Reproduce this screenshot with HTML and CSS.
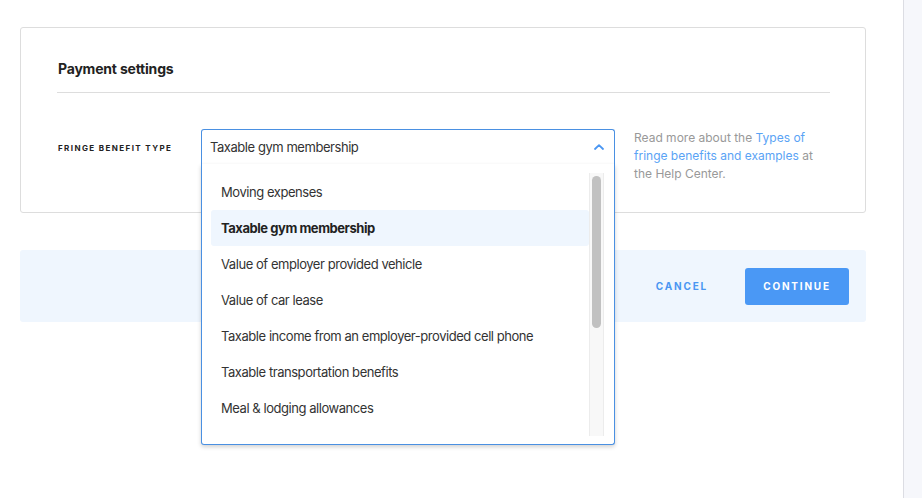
FILE: index.html
```html
<!DOCTYPE html>
<html lang="en">
<head>
    <meta charset="UTF-8">
    <meta name="viewport" content="width=device-width, initial-scale=1.0">
    <title>Payment settings</title>
    <link rel="stylesheet" href="styles.css">
</head>
<body>
    <div class="page">
        <main class="main">
            <section class="card">
                <h2 class="card-title">Payment settings</h2>
                <div class="form-row">
                    <label class="field-label">Fringe benefit type</label>
                    <div class="select">
                        <div class="select-head">
                            <span>Taxable gym membership</span>
                            <svg class="chevron" width="10" height="6" viewBox="0 0 10 6">
                                <path d="M1 5 L5 1.2 L9 5" fill="none" stroke="#4a96f2" stroke-width="1.8" stroke-linecap="round" stroke-linejoin="round"/>
                            </svg>
                        </div>
                        <div class="menu">
                            <ul class="options">
                                <li>Moving expenses</li>
                                <li class="selected">Taxable gym membership</li>
                                <li>Value of employer provided vehicle</li>
                                <li>Value of car lease</li>
                                <li>Taxable income from an employer-provided cell phone</li>
                                <li>Taxable transportation benefits</li>
                                <li>Meal &amp; lodging allowances</li>
                            </ul>
                            <div class="scrollbar"><div class="thumb"></div></div>
                        </div>
                    </div>
                    <p class="help">Read more about the <a href="#">Types of fringe benefits and examples</a> at the Help Center.</p>
                </div>
            </section>
            <footer class="actions">
                <button class="btn-cancel">Cancel</button>
                <button class="btn-continue">Continue</button>
            </footer>
        </main>
        <aside class="sidebar"></aside>
    </div>
</body>
</html>
```

FILE: styles.css
```css
* {
    margin: 0;
    padding: 0;
    box-sizing: border-box;
    font-family: Inter, "Liberation Sans", sans-serif;
}
body {
    background: #ffffff;
    color: #2b2b2b;
    min-height: 100vh;
    overflow: hidden;
}
.page {
    display: flex;
    min-height: 100vh;
}
.main {
    width: 903px;
    padding: 27px 37px 0 20px;
}
.sidebar {
    flex: 1;
    background: #f6f7fb;
    border-left: 1px solid #dcdde3;
}
.card {
    border: 1px solid #dddddd;
    border-radius: 3px;
    padding: 0 35px 0 36px;
    height: 186px;
}
.card-title {
    font-size: 14px;
    font-weight: 700;
    letter-spacing: -0.2px;
    color: #222;
    line-height: 20px;
    padding: 31px 1px 13px;
    border-bottom: 1px solid #dddddd;
}
.form-row {
    display: flex;
    align-items: flex-start;
    padding-top: 36px;
}
.field-label {
    width: 144px;
    padding-top: 14px;
    padding-left: 1px;
    font-size: 8px;
    font-weight: 700;
    letter-spacing: 1.4px;
    text-transform: uppercase;
    color: #222;
}
.select {
    position: relative;
    width: 414px;
}
.select-head {
    display: flex;
    justify-content: space-between;
    align-items: center;
    height: 36px;
    padding: 0 10px 0 8px;
    border: 1px solid #4a90e2;
    border-bottom-color: #a5a9b1;
    border-radius: 3px 3px 0 0;
    font-size: 13px;
    letter-spacing: -0.45px;
    color: #333;
}
.menu {
    position: absolute;
    top: 35px;
    left: 0;
    right: 0;
    height: 281px;
    background: #fff;
    border: 1px solid #4a90e2;
    border-top: none;
    border-radius: 0 0 3px 3px;
    box-shadow: 0 2px 4px rgba(0, 0, 0, 0.18);
    display: flex;
    padding: 10px 10px 8px 9px;
    z-index: 2;
}
.options {
    list-style: none;
    flex: 1;
}
.options li {
    height: 36px;
    line-height: 36px;
    padding-left: 10px;
    font-size: 13px;
    letter-spacing: -0.45px;
    color: #333;
    border-radius: 3px;
}
.options li.selected {
    background: #eff6fe;
    font-weight: 700;
    color: #222;
}
.scrollbar {
    width: 15px;
    margin-top: -1px;
    background: #f8f8f8;
    border-left: 1px solid #ececec;
    border-right: 1px solid #ececec;
    padding: 3px 2px;
}
.thumb {
    height: 152px;
    background: #c1c1c1;
    border-radius: 5px;
}
.help {
    width: 196px;
    margin-left: 19px;
    font-size: 12px;
    line-height: 18px;
    color: #999;
}
.help a {
    color: #5aa3f5;
    text-decoration: none;
}
.actions {
    margin-top: 37px;
    height: 72px;
    background: #eff6fe;
    border-radius: 3px;
    display: flex;
    justify-content: flex-end;
    align-items: center;
    gap: 24px;
    padding-right: 17px;
}
.actions button {
    border: none;
    font-size: 10px;
    font-weight: 700;
    letter-spacing: 1.8px;
    text-transform: uppercase;
    cursor: pointer;
}
.btn-cancel {
    background: none;
    color: #4a96f2;
    padding: 0 13px;
    height: 37px;
}
.btn-continue {
    background: #4a98f5;
    color: #fff;
    width: 104px;
    height: 37px;
    border-radius: 3px;
}
```
